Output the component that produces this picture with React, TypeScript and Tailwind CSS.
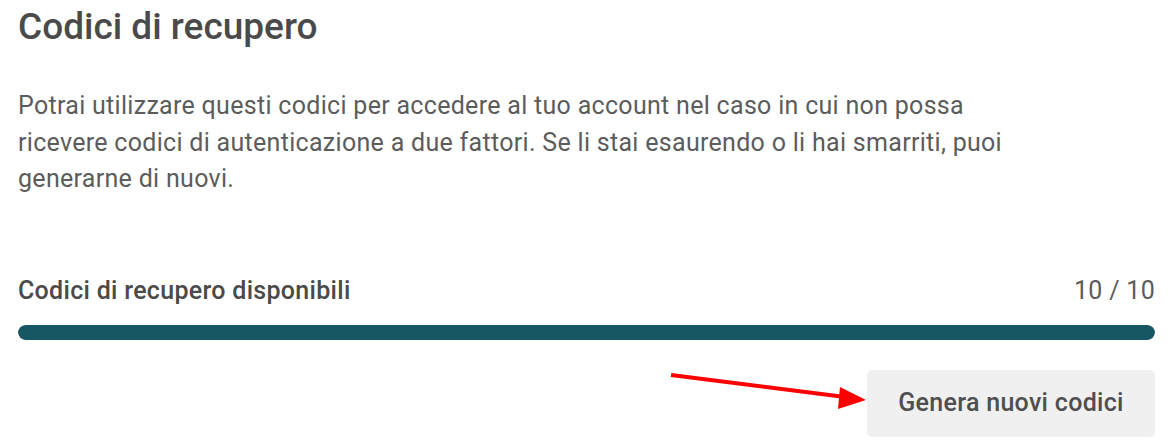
import React from 'react'

export default function App() {
  return (
    <div className="relative w-[1173px] h-[447px] overflow-hidden bg-white" style={{ fontFamily: 'Roboto, "Liberation Sans", sans-serif' }}>
      <div className="pl-[18px] pr-[18px] pt-[5px]">
        <h1 className="text-[37px] leading-[44px] font-medium text-[#4a4a4a]">Codici di recupero</h1>

        <p className="mt-[39px] w-[1000px] text-[25px] leading-[36.5px] tracking-[0.3px] text-[#5c5c5c]">
          Potrai utilizzare questi codici per accedere al tuo account nel caso in cui non possa ricevere codici di
          autenticazione a due fattori. Se li stai esaurendo o li hai smarriti, puoi generarne di nuovi.
        </p>

        <div className="mt-[79px] flex items-center justify-between text-[25px] leading-[28px] tracking-[0.3px]">
          <span className="font-medium text-[#4a4a4a]">Codici di recupero disponibili</span>
          <span className="text-[#5c5c5c]">10 / 10</span>
        </div>

        <div className="mt-[20px] h-[15px] w-full rounded-full bg-[#e5e5e5] overflow-hidden">
          <div className="h-full rounded-full bg-[#175763]" style={{ width: '100%' }} />
        </div>

        <div className="mt-[30px] flex justify-end">
          <button className="h-[67px] w-[288px] rounded-[5px] bg-[#f0f0f0] text-[25px] tracking-[0.3px] font-medium text-[#4f4f4f]">
            Genera nuovi codici
          </button>
        </div>
      </div>

      <svg className="absolute left-0 top-0" width="1173" height="447">
        <line x1="671" y1="375" x2="845" y2="397" stroke="#ff0000" strokeWidth="4" />
        <polygon points="866,400 840,387 838,409" fill="#ff0000" />
      </svg>
    </div>
  )
}
